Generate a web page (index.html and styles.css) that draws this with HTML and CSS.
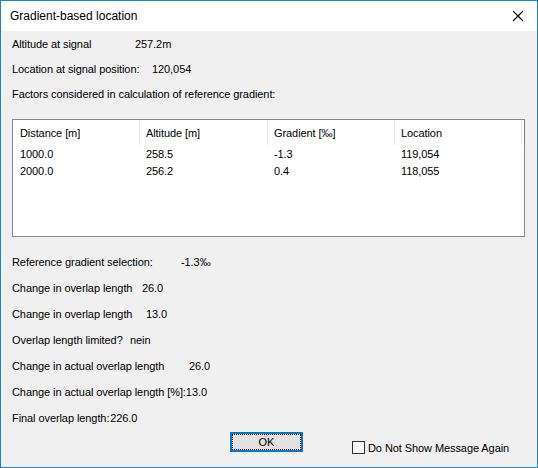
FILE: index.html
```html
<!DOCTYPE html>
<html>
<head>
<meta charset="utf-8">
<link rel="stylesheet" href="styles.css">
</head>
<body>
<div class="window">
  <div class="titlebar">
    <span class="title">Gradient-based location</span>
    <svg class="close" width="12" height="12" viewBox="0 0 12 12"><path d="M1 1 L11 11 M11 1 L1 11" stroke="#000" stroke-width="1.1" fill="none"/></svg>
  </div>
  <div class="body">
    <div class="row"><span class="lbl w1">Altitude at signal</span><span>257.2m</span></div>
    <div class="row"><span class="lbl w2">Location at signal position:</span><span>120,054</span></div>
    <div class="row"><span>Factors considered in calculation of reference gradient:</span></div>

    <div class="listbox">
      <div class="grid head">
        <div class="cell">Distance [m]</div>
        <div class="cell">Altitude [m]</div>
        <div class="cell">Gradient [‰]</div>
        <div class="cell">Location</div>
      </div>
      <div class="grid data">
        <div class="cell">1000.0</div>
        <div class="cell">258.5</div>
        <div class="cell">-1.3</div>
        <div class="cell">119,054</div>
      </div>
      <div class="grid data">
        <div class="cell">2000.0</div>
        <div class="cell">256.2</div>
        <div class="cell">0.4</div>
        <div class="cell">118,055</div>
      </div>
    </div>

    <div class="lower">
      <div class="row2"><span class="lbl w3">Reference gradient selection:</span><span>-1.3‰</span></div>
      <div class="row2"><span class="lbl w4">Change in overlap length</span><span>26.0</span></div>
      <div class="row2"><span class="lbl w5">Change in overlap length</span><span>13.0</span></div>
      <div class="row2"><span class="lbl w6">Overlap length limited?</span><span>nein</span></div>
      <div class="row2"><span class="lbl w7">Change in actual overlap length</span><span>26.0</span></div>
      <div class="row2"><span>Change in actual overlap length [%]:13.0</span></div>
      <div class="row2"><span>Final overlap length:&#8202;226.0</span></div>
    </div>

    <div class="footer">
      <button class="ok"><span class="focus">OK</span></button>
      <label class="check"><span class="box"></span><span>Do Not Show Message Again</span></label>
    </div>
  </div>
</div>
</body>
</html>
```

FILE: styles.css
```css
html, body {
  margin: 0;
  padding: 0;
}
body {
  width: 538px;
  height: 468px;
  font-family: "Liberation Sans", Arial, sans-serif;
  font-size: 11px;
  letter-spacing: -0.08px;
  color: #000;
  background: #f0f0f0;
}
.window {
  box-sizing: border-box;
  width: 538px;
  height: 468px;
  border: 1px solid #1883d7;
  background: #f0f0f0;
  display: flex;
  flex-direction: column;
}
.titlebar {
  height: 30px;
  flex: none;
  background: #fff;
  display: flex;
  align-items: center;
  justify-content: space-between;
  padding: 0 10px 0 9px;
}
.title {
  font-family: "Liberation Sans", Arial, sans-serif;
  font-size: 12px;
  letter-spacing: 0;
  color: #000;
  margin-top: -1px;
}
.close {
  display: block;
  margin-right: 3px;
  margin-top: -1px;
}
.body {
  flex: 1;
  padding: 0 0 0 11px;
  display: flex;
  flex-direction: column;
}
.row {
  height: 25px;
  display: flex;
  align-items: center;
  white-space: nowrap;
}
.row2 {
  height: 26px;
  display: flex;
  align-items: center;
  white-space: nowrap;
}
.lbl { flex: none; }
.w1 { width: 123px; }
.w2 { width: 140px; }
.w3 { width: 169px; }
.w4 { width: 130px; }
.w5 { width: 134px; }
.w6 { width: 118px; }
.w7 { width: 177px; }

.listbox {
  margin-top: 13px;
  width: 511px;
  height: 116px;
  border: 1px solid #828790;
  background: #fff;
}
.grid {
  display: grid;
  grid-template-columns: 127px 128px 127px 127px;
}
.head {
  height: 25px;
}
.head .cell {
  border-right: 1px solid #e5e5e5;
  display: flex;
  align-items: center;
  height: 25px;
}
.data {
  height: 17px;
}
.data .cell {
  height: 17px;
  display: flex;
  align-items: center;
}
.cell {
  box-sizing: border-box;
  padding-left: 6px;
  white-space: nowrap;
}
.grid .cell:first-child { padding-left: 7px; }

.lower {
  margin-top: 12px;
  display: flex;
  flex-direction: column;
}
.footer {
  position: relative;
  flex: 1;
}
.ok {
  position: absolute;
  left: 218px;
  top: 1px;
  box-sizing: border-box;
  width: 73px;
  height: 20px;
  border: 2px solid #0078d7;
  background: #e1e1e1;
  padding: 0;
  font-family: "Liberation Sans", Arial, sans-serif;
  font-size: 11px;
  color: #000;
}
.focus {
  position: absolute;
  inset: 0;
  border: 1px dotted #000;
  display: flex;
  align-items: center;
  justify-content: center;
}
.check {
  position: absolute;
  left: 340px;
  top: 10px;
  display: flex;
  align-items: center;
  gap: 3px;
  white-space: nowrap;
}
.box {
  box-sizing: border-box;
  width: 13px;
  height: 13px;
  border: 1px solid #333;
  background: #fff;
}
```
